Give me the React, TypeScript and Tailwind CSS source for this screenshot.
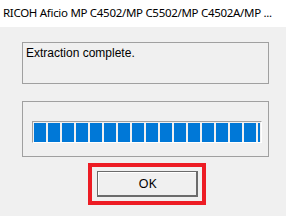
import React from "react";

export default function App() {
  const blocks = Array.from({ length: 16 });
  return (
    <div className="w-[286px] h-[216px] bg-[#f0f0f0] overflow-hidden">
      <div className="h-[27px] bg-white pl-[3px] pt-[5px] text-[11.5px] leading-[16px] tracking-[-0.3px] text-black whitespace-nowrap" style={{ fontFamily: '"Noto Sans", "Open Sans", sans-serif' }}>
        RICOH Aficio MP C4502/MP C5502/MP C4502A/MP ...
      </div>
      <div className="ml-[22px] mt-[15px] w-[247px] h-[42px] border border-[#a0a0a0] pl-[3px] pt-[3px] text-[12px] leading-[14px] text-black" style={{ fontFamily: '"Liberation Sans", Arial, sans-serif' }}>
        Extraction complete.
      </div>
      <div className="ml-[22px] mt-[17px] w-[247px] h-[56px] border border-[#a0a0a0] pl-[9px] pt-[19px]">
        <div className="w-[230px] h-[22px] border-t border-l border-[#a0a0a0] border-r border-b border-r-white border-b-white pl-[1px] pt-[1px] flex gap-[2px] overflow-hidden bg-[#f0f0f0]">
          {blocks.map((_, i) => (
            <div key={i} className="w-[12px] h-[19px] shrink-0 bg-[#0078d7]" />
          ))}
          <div className="w-[2px] h-[19px] shrink-0 bg-[#0078d7]" />
        </div>
      </div>
      <div className="ml-[88px] mt-[6px] w-[118px] h-[42px] border-[4px] border-[#ed1c24] pl-[5px] pt-[4px]">
        <div className="w-[101px] h-[26px] border border-[#6b6b6b] border-r-2 border-b-2 bg-[#f0f0f0] flex">
          <div className="flex-1 border-t border-l border-white flex items-center justify-center text-[13px] text-black" style={{ fontFamily: '"Noto Sans", "Open Sans", sans-serif' }}>
            OK
          </div>
        </div>
      </div>
    </div>
  );
}
